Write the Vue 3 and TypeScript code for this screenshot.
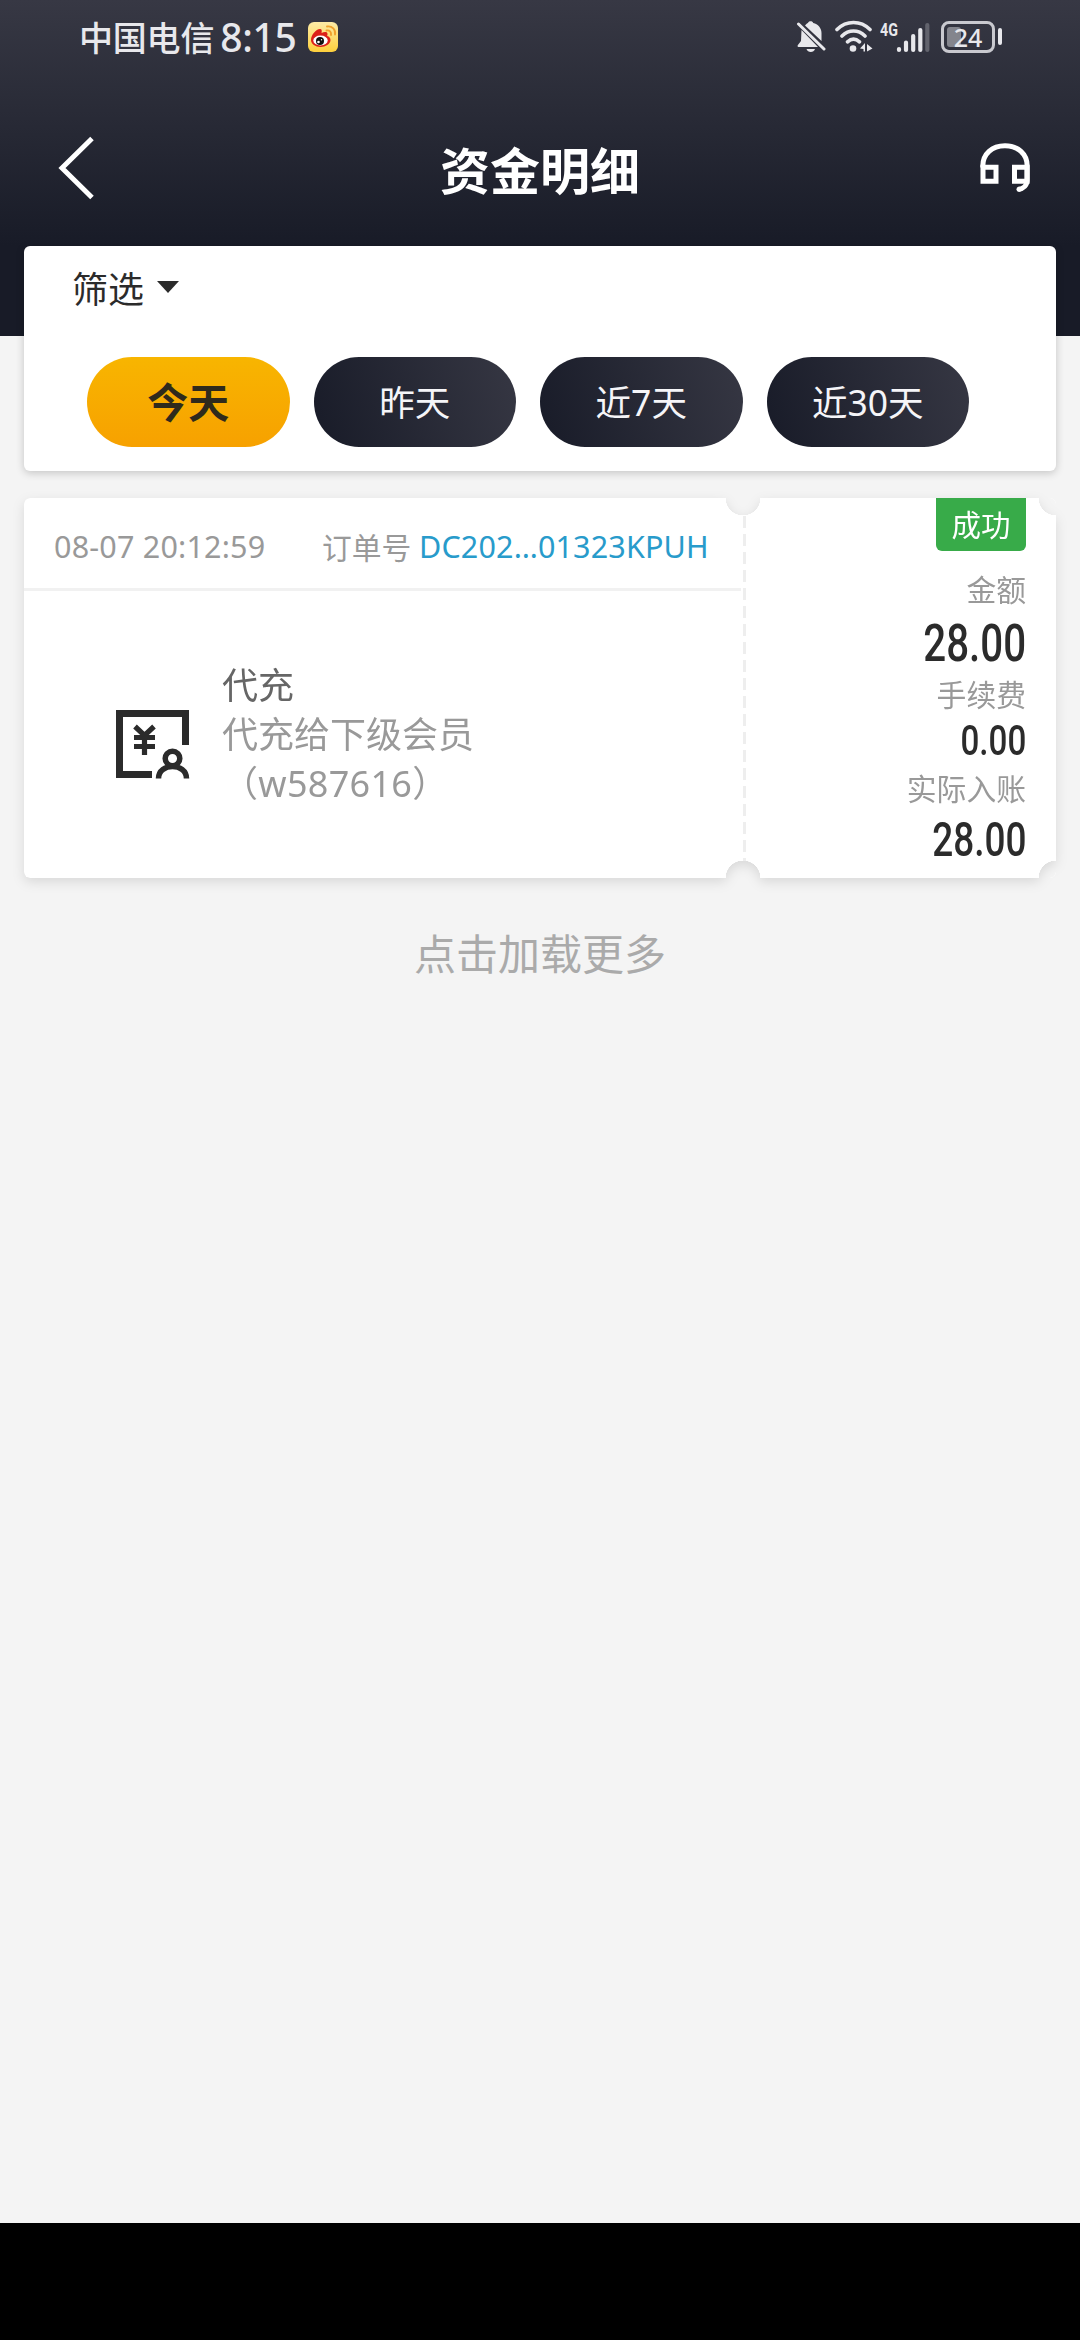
<script setup lang="ts">
import { ref } from 'vue'

interface Range {
  key: string
  label: string
}

interface Amount {
  label: string
  value: string
  size: 'large' | 'small' | 'medium'
}

const ranges: Range[] = [
  { key: 'today', label: '今天' },
  { key: 'yesterday', label: '昨天' },
  { key: 'week', label: '近7天' },
  { key: 'month', label: '近30天' },
]
const active = ref('today')

const amounts: Amount[] = [
  { label: '金额', value: '28.00', size: 'large' },
  { label: '手续费', value: '0.00', size: 'small' },
  { label: '实际入账', value: '28.00', size: 'medium' },
]
</script>

<template>
  <div class="screen">
    <header class="top">
      <div class="status">
        <span class="carrier">中国电信</span>
        <span class="clock">8:15</span>
        <svg class="weibo" width="30" height="30" viewBox="0 0 30 30">
          <defs>
            <linearGradient id="wb" x1="0" y1="0" x2="0" y2="1">
              <stop offset="0" stop-color="#fdeba6" />
              <stop offset="1" stop-color="#fdcf3c" />
            </linearGradient>
          </defs>
          <rect width="30" height="30" rx="6" fill="url(#wb)" />
          <path d="M3 18C3 13 8 7 12 7c2 0 2 2 1.500 4 3-1.500 6-1.500 6 1 0 1-.3 1.500-.3 2 2 .6 3.300 2 3.300 4 0 4-5 7-10 7S3 22 3 18z" fill="#dc2018" />
          <ellipse cx="12.500" cy="18.500" rx="7.200" ry="5" fill="#fff" />
          <circle cx="12" cy="19" r="4" fill="#111" />
          <circle cx="10.500" cy="20" r="1.300" fill="#fff" />
          <circle cx="13.500" cy="17.800" r=".7" fill="#fff" />
          <path d="M18.500 8.500c3-.5 5 1.500 4.500 4.500M19 4.500c5-.8 9 3 8 8" fill="none" stroke="#f0a02c" stroke-width="1.900" stroke-linecap="round" />
        </svg>
        <span class="grow"></span>
        <svg width="30" height="34" viewBox="0 0 30 34" fill="#e8e8ec">
          <path d="M5.500 10 22 27H2.500c-1 0-1.300-1.200-.6-2L5 21z" />
          <path d="M9 5.500C10.500 4 11 3.400 12 3.100c.4-2.600 4.800-2.600 5.200 0C22 4.300 25.500 8 25.500 13v8z" />
          <path d="M10.500 29h8.500c-1 4-7.500 4-8.500 0z" />
          <path d="M2.500 4 28 29" stroke="#e8e8ec" stroke-width="3" stroke-linecap="round" />
        </svg>
        <svg class="wifi" width="38" height="34" viewBox="0 0 38 34" fill="none" stroke="#e8e8ec" stroke-width="3.600" stroke-linecap="round">
          <path d="M2 9.500c9.500-9.300 23.500-9.300 33 0M7 16c6.800-6.600 16.200-6.600 23 0M12.500 21.800c4-3.600 8-3.600 12 0" />
          <circle cx="18" cy="28.500" r="3.300" fill="#e8e8ec" stroke="none" />
          <path d="M25 28.500l5-5.500v8.500h-1.500V29zM32 31.500V24l5.500 4.500z" fill="#e8e8ec" stroke="none" />
        </svg>
        <span class="net">4G</span>
        <svg class="bars" width="34" height="34" viewBox="0 0 34 34" stroke="#e8e8ec" stroke-width="4.200" stroke-linecap="round">
          <path d="M3 30v-1M10 30v-7.500M17.200 30V16M24.300 30V10" />
          <path d="M31.300 30V5" stroke="#62636d" />
        </svg>
        <div class="battery"><span class="charge"></span><b>24</b></div>
        <span class="cap"></span>
      </div>
      <div class="bar">
        <svg class="back" width="38" height="64" viewBox="0 0 38 64">
          <path d="M34 2.500 4 32l30 29.500" fill="none" stroke="#fff" stroke-width="5" />
        </svg>
        <h1>资金明细</h1>
        <svg width="50" height="50" viewBox="0 0 50 50" fill="none" stroke="#fff" stroke-width="5">
          <path d="M2.800 24.500V23C2.800 11 12 2.800 25 2.800S47.200 11 47.200 23v14c0 5-3.500 8.700-9 9.500" />
          <circle cx="39" cy="46.300" r="2.500" fill="#fff" stroke="none" />
          <path d="M3 24.200h13v14H3zM34.500 24.200H47v14H34.500z" />
        </svg>
      </div>
    </header>

    <main>
      <section class="filter">
        <div class="filter-title">筛选<i class="caret"></i></div>
        <div class="pills">
          <button
            v-for="r in ranges"
            :key="r.key"
            :class="['pill', { on: active === r.key }]"
            @click="active = r.key"
          >{{ r.label }}</button>
        </div>
      </section>

      <section class="ticket-wrap">
        <div class="ticket">
          <div class="left">
            <div class="meta">
              <span class="time">08-07 20:12:59</span>
              <span class="no">订单号</span>
              <span class="code">DC202…01323KPUH</span>
            </div>
            <div class="body">
              <svg width="74" height="70" viewBox="0 0 74 70" fill="none" stroke="#2b2b2b">
                <path d="M36 65.500H3.500v-61h66V36" stroke-width="7" />
                <path d="M19 17.500l9.500 9 9.500-9M28.500 26v20M18 28.500h21M18 37.500h21" stroke-width="5.200" />
                <circle cx="56.500" cy="49.500" r="7.300" stroke-width="5.500" />
                <path d="M42.500 69.500c0-16 28-16 28 0" stroke-width="5.500" />
              </svg>
              <div class="desc">
                <p class="kind">代充</p>
                <p>代充给下级会员</p>
                <p class="user">（w587616）</p>
              </div>
            </div>
          </div>
          <div class="right">
            <span class="badge">成功</span>
            <div v-for="a in amounts" :key="a.label" :class="['amount', a.size]">
              <span class="label">{{ a.label }}</span>
              <span class="value">{{ a.value }}</span>
            </div>
          </div>
        </div>
      </section>
      <div class="more">点击加载更多</div>
    </main>
    <footer></footer>
  </div>
</template>

<style>
body {
  background: #f4f4f4;
}
</style>

<style scoped>
* {
  box-sizing: border-box;
}
.screen {
  width: 1080px;
  height: 2340px;
  display: flex;
  flex-direction: column;
  background: #f4f4f4;
  font-family: "Noto Sans", "Noto Sans CJK SC", sans-serif;
  overflow: hidden;
}
.top {
  flex: none;
  height: 336px;
  background: linear-gradient(180deg, #373844 0, #181b27 246px);
}
.status {
  height: 72px;
  padding: 1px 78px 0 79px;
  display: flex;
  align-items: center;
  color: #e8e8ec;
}
.carrier {
  font: 500 34px/72px "Noto Sans CJK SC", sans-serif;
  letter-spacing: -0.2px;
}
.clock {
  margin-left: 6px;
  width: 82px;
  font: 500 39px/72px "Noto Sans", sans-serif;
  letter-spacing: -0.3px;
}
.weibo {
  margin-left: 6px;
}
.grow {
  flex: 1;
}
.wifi {
  margin-left: 9px;
}
.net {
  align-self: flex-start;
  margin: 19px 0 0 7px;
  width: 18px;
  font: 700 19px/19px Roboto, sans-serif;
  transform: scaleX(0.75);
  transform-origin: left;
}
.bars {
  margin-left: -2px;
}
.battery {
  position: relative;
  width: 54px;
  height: 32px;
  margin-left: 11px;
  border: 3px solid #c9c9cf;
  border-radius: 8px;
  text-align: center;
}
.battery b {
  position: relative;
  display: block;
  font: 500 25px/26px "Noto Sans", sans-serif;
}
.charge {
  position: absolute;
  left: 3px;
  top: 3px;
  width: 14px;
  height: 20px;
  border-radius: 3px;
  background: #84858d;
}
.cap {
  width: 4px;
  height: 17px;
  margin-left: 3px;
  border-radius: 2px;
  background: #e8e8ec;
}
.bar {
  height: 192px;
  padding: 0 50px 0 58px;
  display: flex;
  align-items: center;
  justify-content: space-between;
}
h1 {
  margin: 0 0 0 4px;
  color: #fff;
  font: 700 50px/60px "Noto Sans CJK SC", sans-serif;
}
main {
  flex: 1;
  padding: 0 24px;
  margin-top: -90px;
}
.filter {
  height: 225px;
  border-radius: 6px;
  background: #fff;
  box-shadow: 0 2px 8px rgba(0, 0, 0, 0.2);
  padding: 18px 63px 0;
}
.filter-title {
  display: flex;
  align-items: center;
  height: 46px;
  margin-left: -15px;
  color: #2b2b2b;
  font-size: 36px;
}
.caret {
  margin: 0 0 0 13px;
  border: 11.5px solid transparent;
  border-top: 12px solid #2b2b2b;
  border-bottom: 0;
}
.pills {
  display: flex;
  gap: 24px;
  margin-top: 47px;
}
.pill {
  flex: none;
  width: 202.500px;
  height: 90px;
  padding: 0;
  border: 0;
  border-radius: 45px;
  background: linear-gradient(72deg, #181b28, #363743);
  color: #f5f5f8;
  font: 400 35.500px/91px "Noto Sans", "Noto Sans CJK SC", sans-serif;
}
.pill.on {
  background: linear-gradient(180deg, #f8b500, #f7a100);
  color: #2f2a1c;
  font-size: 41px;
  font-weight: 700;
}
.ticket-wrap {
  margin-top: 27px;
  filter: drop-shadow(0 4px 6px rgba(0, 0, 0, 0.11));
}
.ticket {
  height: 380px;
  display: flex;
  border-radius: 6px;
  background: #fff;
  mask:
    radial-gradient(circle 17.500px at 719px 0, #000 98%, transparent) exclude,
    radial-gradient(circle 17.500px at 719px 380px, #000 98%, transparent) exclude,
    radial-gradient(circle 17.500px at 1032px 0, #000 98%, transparent) exclude,
    radial-gradient(circle 17.500px at 1032px 380px, #000 98%, transparent) exclude,
    linear-gradient(#000, #000);
}
.left {
  width: 722px;
  padding-right: 5px;
  background: repeating-linear-gradient(180deg, #eee 0 12px, transparent 12px 18px) right 0 / 3px 100% no-repeat;
}
.meta {
  height: 93px;
  border-bottom: 3px solid #f1f1f1;
  padding: 5px 10px 0 30px;
  display: flex;
  align-items: center;
  white-space: nowrap;
  color: #999;
  font-size: 30px;
}
.time {
  width: 268px;
  font-size: 30.500px;
  letter-spacing: 0.2px;
}
.no {
  width: 97px;
  font-size: 29.800px;
}
.code {
  color: #289bcb;
  font-size: 30.500px;
  letter-spacing: 0.15px;
}
.body {
  display: flex;
  align-items: center;
  height: 287px;
  padding-left: 92px;
}
.body svg {
  flex: none;
  margin-top: 19px;
}
.desc {
  margin-left: 32px;
  color: #999;
  font-size: 36px;
  line-height: 49px;
}
.desc p {
  margin: 0;
  white-space: nowrap;
}
.desc .kind {
  color: #666;
}
.user {
  letter-spacing: 0.3px;
}
.right {
  flex: 1;
  display: flex;
  flex-direction: column;
  align-items: flex-end;
  padding-right: 30px;
}
.badge {
  width: 90px;
  height: 53px;
  border-radius: 0 0 6px 6px;
  background: #38ab49;
  color: #fff;
  text-align: center;
  font-size: 29.500px;
  line-height: 54px;
}
.amount {
  display: flex;
  flex-direction: column;
  align-items: flex-end;
}
.label {
  height: 40px;
  line-height: 40px;
  font-size: 29.800px;
  color: #999;
}
.value {
  color: #2b2b2b;
  font-family: Roboto, sans-serif;
  font-weight: 500;
  transform: scaleX(0.79);
  transform-origin: right;
}
.large {
  height: 105px;
  padding-top: 19px;
}
.large .value {
  font-size: 51px;
  line-height: 68px;
}
.small {
  height: 94px;
  padding-top: 19px;
}
.small .value {
  font-size: 42px;
  line-height: 52px;
}
.medium {
  padding-top: 19px;
}
.medium .value {
  font-size: 48px;
  line-height: 62px;
  transform: scaleX(0.77);
}
.more {
  margin-top: 46px;
  text-align: center;
  color: #aaa;
  font-size: 42px;
  line-height: 60px;
}
footer {
  flex: none;
  height: 117px;
  background: #000;
}
</style>
